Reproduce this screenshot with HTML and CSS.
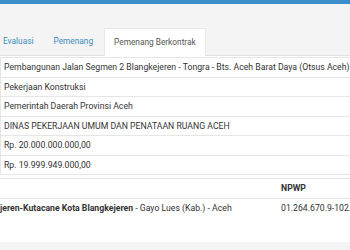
FILE: index.html
```html
<!DOCTYPE html>
<html>
<head>
    <title>Pemenang Berkontrak</title>
    <link rel="stylesheet" href="styles.css">
</head>
<body>
    <div class="topbar"></div>

    <div class="nav-tabs">
        <a class="tab first">Evaluasi</a>
        <a class="tab">Pemenang</a>
        <a class="tab active">Pemenang Berkontrak</a>
    </div>

    <div class="tab-content">
        <table class="detail">
            <tr><td>Pembangunan Jalan Segmen 2 Blangkejeren - Tongra - Bts. Aceh Barat Daya (Otsus Aceh)</td></tr>
            <tr><td>Pekerjaan Konstruksi</td></tr>
            <tr><td>Pemerintah Daerah Provinsi Aceh</td></tr>
            <tr><td>DINAS PEKERJAAN UMUM DAN PENATAAN RUANG ACEH</td></tr>
            <tr><td>Rp. 20.000.000.000,00</td></tr>
            <tr><td>Rp. 19.999.949.000,00</td></tr>
        </table>

        <table class="winner">
            <tr>
                <th class="col-alamat"></th>
                <th class="col-npwp">NPWP</th>
            </tr>
            <tr>
                <td class="col-alamat"><b>jeren-Kutacane Kota Blangkejeren</b> - Gayo Lues (Kab.) - Aceh</td>
                <td class="col-npwp">01.264.670.9-102.000</td>
            </tr>
        </table>
    </div>

    <div class="footer"></div>
</body>
</html>
```

FILE: styles.css
```css
body {
    margin: 0;
    font-family: Roboto, "Liberation Sans", sans-serif;
    font-size: 8.7px;
    color: #333;
    background: #fff;
    overflow: hidden;
}
.topbar {
    height: 4px;
    background-color: #3c8dcc;
}
.nav-tabs {
    display: flex;
    padding-top: 24px;
    background-color: #f4f4f4;
    border-bottom: 1px solid #e2e2e2;
    white-space: nowrap;
    font-size: 8.3px;
}
.tab {
    padding: 7px 9px;
    line-height: 13px;
    margin-right: 2px;
    color: #3c8dbc;
}
.tab.first {
    margin-left: -6px;
}
.tab.active {
    background: #fff;
    color: #555;
    border: 1px solid #e8e8e8;
    border-bottom: none;
    margin-bottom: -1px;
}
.tab-content {
    height: 185px;
    padding-top: 1px;
    white-space: nowrap;
}
table {
    border-collapse: collapse;
    width: 360px;
}
td, th {
    padding: 3.25px 3px;
    line-height: 12px;
    text-align: left;
}
.detail td {
    border: 1px solid #e6e6e6;
}
.winner {
    width: 420px;
    table-layout: fixed;
    margin-top: 3px;
}
.winner th {
    font-weight: bold;
    border-top: 1px solid #e6e6e6;
    border-bottom: 1px solid #e6e6e6;
}
.winner .col-alamat {
    width: 275px;
    padding-left: 0;
}
.footer {
    height: 10px;
    background: #f4f4f4;
}
```
